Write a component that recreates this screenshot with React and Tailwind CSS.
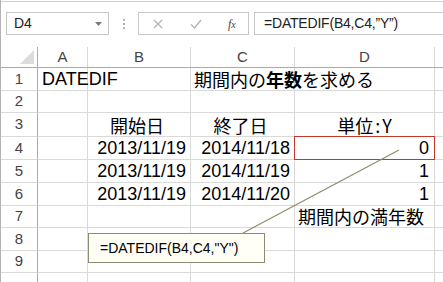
import React from "react";

const F = { fontFamily: '"Liberation Sans", "Noto Sans CJK JP", sans-serif' };
const JP = { fontFamily: '"Noto Sans CJK JP", sans-serif' };

function Cell({ w, className = "", children }) {
  return (
    <div className={`${w} shrink-0 h-full border-r border-b border-[#d9d9d9] flex relative ${className}`}>
      {children}
    </div>
  );
}

function Row({ h, num, a, b, c, d, dClass = "", dOverlay }) {
  return (
    <div className={`flex ${h}`}>
      <div className="w-[37px] shrink-0 h-full border-r border-r-[#ababab] border-b border-b-[#d9d9d9] flex items-center justify-center text-[15px] text-[#444]">
        {num}
      </div>
      <Cell w="w-[50px]" className="items-end">{a}</Cell>
      <Cell w="w-[103px]" className="items-end justify-end pr-[4px]">{b}</Cell>
      <Cell w="w-[104px]" className="items-end justify-end pr-[4px]">{c}</Cell>
      <Cell w="w-[140px]" className={`items-end ${dClass}`}>
        {d}
        {dOverlay}
      </Cell>
      <div className="flex-1 h-full border-b border-[#d9d9d9]" />
    </div>
  );
}

export default function App() {
  const txt = "text-[18px] leading-[22px] text-black";
  return (
    <div className="w-[443px] h-[282px] overflow-hidden bg-white relative border-l border-[#b4b4b4]" style={F}>
      {/* top line */}
      <div className="h-[2px] border-b border-[#cfcfcf]" />
      {/* formula bar */}
      <div className="flex items-center mt-[10px] h-[23px]">
        <div className="ml-[5px] w-[103px] h-[23px] border border-[#c6c6c6] flex items-center justify-between pl-[7px] pr-[6px]">
          <span className="text-[14px] text-[#222]">D4</span>
          <svg width="7" height="4" viewBox="0 0 7 4"><path d="M0 0h7L3.5 4z" fill="#7a7a7a" /></svg>
        </div>
        <div className="w-[29px] flex flex-col items-center gap-[2px]">
          <span className="w-[2px] h-[2px] bg-[#b0b0b0]" />
          <span className="w-[2px] h-[2px] bg-[#b0b0b0]" />
          <span className="w-[2px] h-[2px] bg-[#b0b0b0]" />
        </div>
        <div className="w-[111px] h-[23px] border border-[#c6c6c6] flex items-center">
          <svg className="ml-[14px]" width="10" height="10" viewBox="0 0 10 10"><path d="M1 1L9 9M9 1L1 9" stroke="#b5b5b5" strokeWidth="1.3" /></svg>
          <svg className="ml-[27px]" width="12" height="10" viewBox="0 0 12 10"><path d="M1 5.5L4.5 9L11 1" stroke="#b5b5b5" strokeWidth="1.4" fill="none" /></svg>
          <span className="ml-[26px] text-[12px] italic text-[#444]" style={{ fontFamily: '"Liberation Serif", serif' }}>f<span className="text-[10px]">x</span></span>
        </div>
        <div className="ml-[5px] flex-1 h-[23px] border-l border-t border-b border-[#c6c6c6] flex items-center pl-[9px]">
          <span className="text-[14px] text-[#222] tracking-[-0.2px]">=DATEDIF(B4,C4,”Y”)</span>
        </div>
      </div>
      <div className="h-[12px]" />
      {/* header row */}
      <div className="flex h-[21px] border-b border-[#ababab] text-[15px] text-[#444]">
        <div className="w-[37px] shrink-0 h-full border-r border-[#ababab] relative">
          <svg className="absolute right-[3px] bottom-[3px]" width="14" height="14" viewBox="0 0 14 14"><path d="M14 0V14H0z" fill="#dcdcdc" /></svg>
        </div>
        <div className="w-[50px] shrink-0 border-r border-[#d9d9d9] flex items-center justify-center">A</div>
        <div className="w-[103px] shrink-0 border-r border-[#d9d9d9] flex items-center justify-center">B</div>
        <div className="w-[104px] shrink-0 border-r border-[#d9d9d9] flex items-center justify-center">C</div>
        <div className="w-[140px] shrink-0 border-r border-[#d9d9d9] flex items-center justify-center">D</div>
        <div className="flex-1" />
      </div>
      <Row h="h-[23px]" num="1"
        a={<span className={`${txt} absolute left-[4px] bottom-0 whitespace-nowrap`}>DATEDIF</span>}
        c={<span className={`${txt} absolute left-[3px] bottom-0 whitespace-nowrap`} style={JP}>期間内の<b className="font-bold">年数</b>を求める</span>}
      />
      <Row h="h-[22px]" num="2" />
      <Row h="h-[24px]" num="3"
        b={<span className={`${txt} w-full text-center`} style={JP}>開始日</span>}
        c={<span className={`${txt} w-full text-center`} style={JP}>終了日</span>}
        d={<span className={`${txt} w-full text-center`} style={JP}>単位<span className="mx-[2px]">:</span>Y</span>}
      />
      <Row h="h-[23px]" num="4" b={<span className={txt}>2013/11/19</span>} c={<span className={txt}>2014/11/18</span>}
        dClass="justify-end pr-[5px]" d={<span className={txt}>0</span>}
        dOverlay={<span className="absolute -left-px -top-px -right-px -bottom-px border-[1.5px] border-[#c0392b]" />}
      />
      <Row h="h-[23px]" num="5" b={<span className={txt}>2013/11/19</span>} c={<span className={txt}>2014/11/19</span>}
        dClass="justify-end pr-[5px]" d={<span className={txt}>1</span>} />
      <Row h="h-[23px]" num="6" b={<span className={txt}>2013/11/19</span>} c={<span className={txt}>2014/11/20</span>}
        dClass="justify-end pr-[5px]" d={<span className={txt}>1</span>} />
      <Row h="h-[22px]" num="7"
        d={<span className={`${txt} absolute left-[3px] bottom-0 whitespace-nowrap`} style={JP}>期間内の満年数</span>}
      />
      <Row h="h-[23px]" num="8" />
      <Row h="h-[22px]" num="9" />
      <Row h="h-[23px]" num="" />

      {/* leader line */}
      <svg className="absolute left-0 top-0 pointer-events-none" width="443" height="282">
        <line x1="242" y1="233" x2="398" y2="150" stroke="#8e8c6c" strokeWidth="1.2" />
      </svg>
      {/* callout */}
      <div className="absolute left-[87px] top-[233px] w-[177px] h-[30px] bg-[#fffff5] border border-[#8e8c6c] flex items-center pl-[11px]">
        <span className="text-[14px] text-black">=DATEDIF(B4,C4,"Y")</span>
      </div>
    </div>
  );
}
